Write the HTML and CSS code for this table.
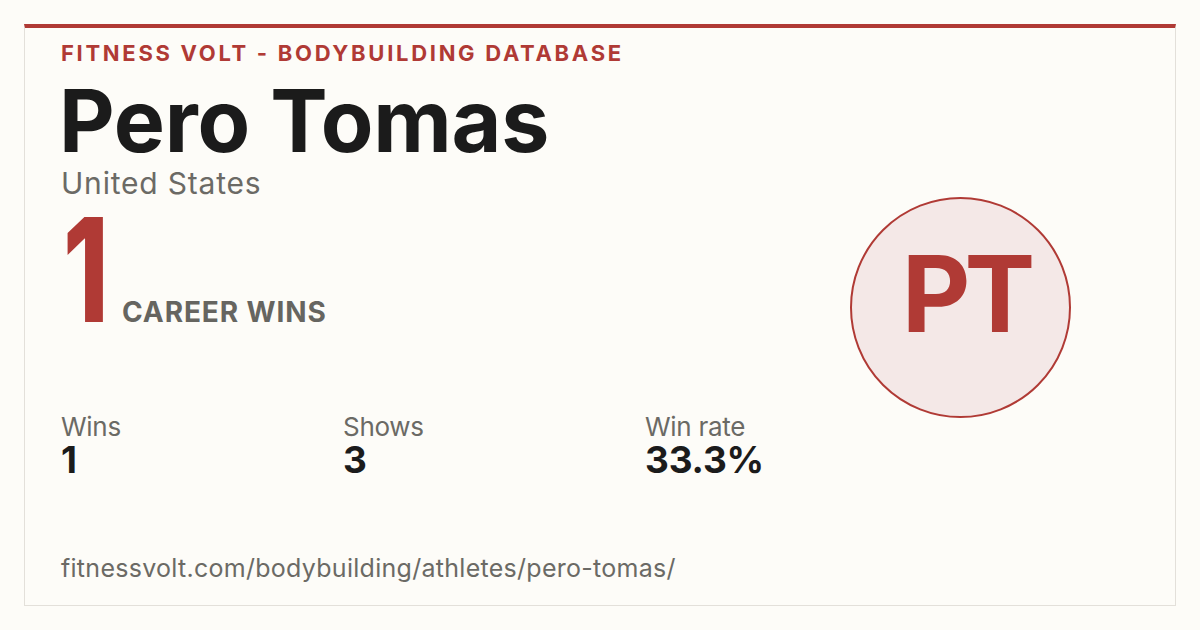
FILE: index.html
```html
<!DOCTYPE html>
<html>
<head>
<meta charset="utf-8">
<link rel="stylesheet" href="styles.css">
</head>
<body>
<div class="card">
  <div class="main">
    <div class="brand">FITNESS VOLT - BODYBUILDING DATABASE</div>
    <h1 class="name">Pero Tomas</h1>
    <div class="country">United States</div>
    <div class="hero">
      <span class="hero-num"><span class="hero-digit">1</span></span>
      <span class="hero-label">CAREER WINS</span>
    </div>
    <div class="stats">
      <div class="stat s1"><div class="stat-label">Wins</div><div class="stat-value">1</div></div>
      <div class="stat s2"><div class="stat-label">Shows</div><div class="stat-value">3</div></div>
      <div class="stat s3"><div class="stat-label">Win rate</div><div class="stat-value">33.3%</div></div>
    </div>
    <div class="url">fitnessvolt.com/bodybuilding/athletes/pero-tomas/</div>
  </div>
  <div class="aside">
    <div class="avatar">PT</div>
  </div>
</div>
</body>
</html>
```
FILE: styles.css
```css
html, body {
  margin: 0;
  padding: 0;
  background: #fdfcf8;
  width: 1200px;
  height: 630px;
  overflow: hidden;
  font-family: Inter, "Liberation Sans", sans-serif;
}
.card {
  box-sizing: border-box;
  margin: 24px;
  width: 1152px;
  height: 582px;
  border: 1px solid #e3e0da;
  border-top: 4px solid #b03a35;
  display: flex;
  padding: 0 36px 0 36px;
}
.main {
  flex: 1;
  display: flex;
  flex-direction: column;
  padding-top: 12px;
}
.brand {
  color: #b03a35;
  font-weight: 700;
  font-size: 22px;
  letter-spacing: 2.7px;
  line-height: 26px;
}
.name {
  margin: 10px 0 0 -2px;
  font-size: 86px;
  font-weight: 700;
  line-height: 90px;
  color: #1b1b1b;
  letter-spacing: -0.2px;
}
.country {
  font-size: 30px;
  color: #6b6a65;
  line-height: 34px;
  letter-spacing: 0.8px;
}
.hero {
  display: flex;
  align-items: baseline;
  margin-top: 15px;
  height: 110px;
}
.hero-num {
  display: inline-block;
  width: 61px;
  font-size: 144px;
  font-weight: 800;
  color: #b03a35;
  line-height: 110px;
}
.hero-digit {
  display: inline-block;
  transform: scaleX(0.72);
  transform-origin: left center;
  margin-left: 2px;
}
.hero-label {
  font-size: 28px;
  font-weight: 700;
  color: #666560;
  letter-spacing: 0.9px;
}
.stats {
  display: flex;
  margin-top: 88px;
}
.stat { display: flex; flex-direction: column; }
.s1 { width: 282px; }
.s2 { width: 302px; }
.stat-label {
  font-size: 26px;
  color: #6b6a65;
  line-height: 28px;
  letter-spacing: -0.3px;
}
.stat-value {
  font-size: 37px;
  font-weight: 700;
  color: #1b1b1b;
  line-height: 38px;
  letter-spacing: -0.2px;
}
.url {
  margin-top: auto;
  margin-bottom: 22px;
  font-size: 25px;
  color: #6b6a65;
  line-height: 30px;
  letter-spacing: 0.28px;
}
.aside {
  display: flex;
  align-items: center;
  padding-bottom: 18px;
  margin-right: 68px;
}
.avatar {
  box-sizing: border-box;
  width: 221px;
  height: 221px;
  border-radius: 50%;
  border: 2px solid #b03a35;
  background: #f4e8e7;
  color: #b03a35;
  font-weight: 700;
  font-size: 106px;
  display: flex;
  align-items: center;
  justify-content: center;
  letter-spacing: -6px;
  padding-bottom: 28px;
  padding-left: 10px;
}
```
